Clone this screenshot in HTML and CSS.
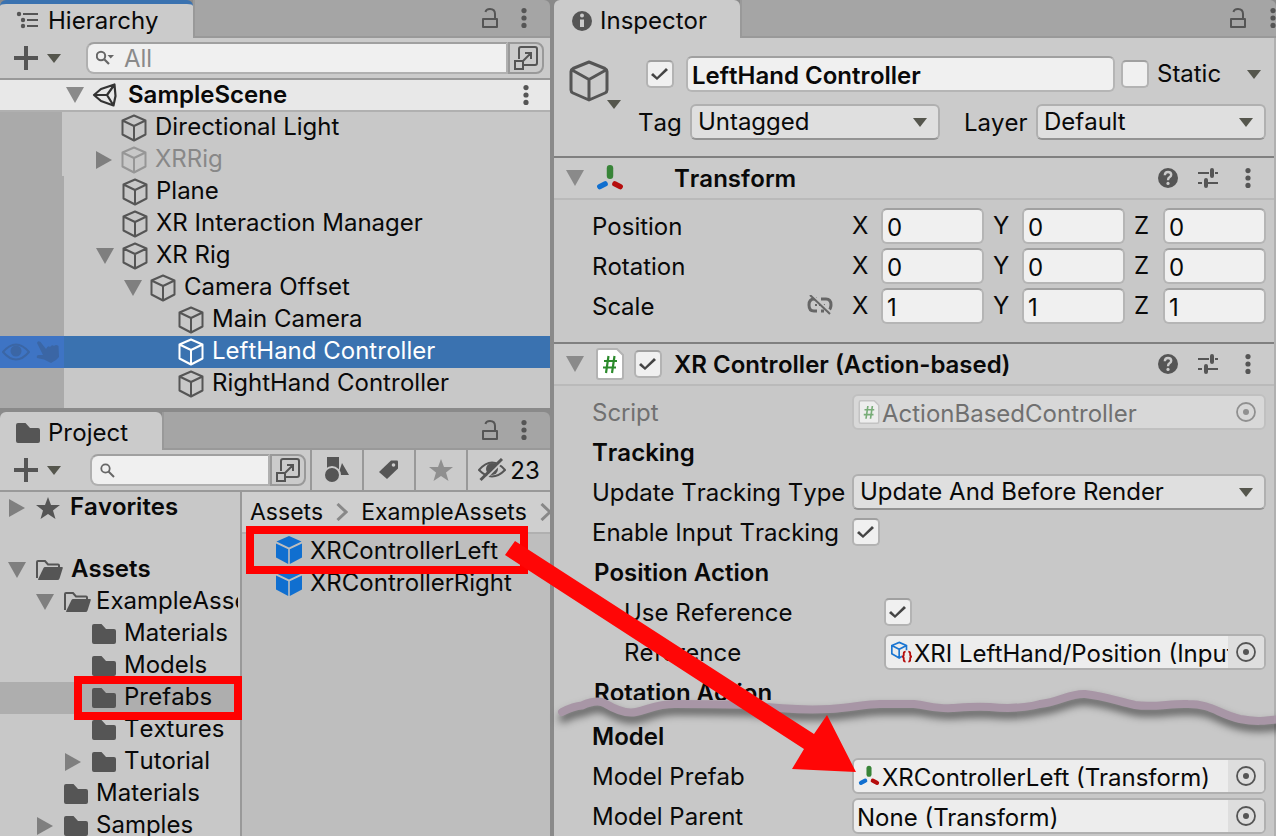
FILE: index.html
```html
<!DOCTYPE html>
<html lang="en">
<head>
<meta charset="utf-8">
<title>SampleScene - Editor</title>
<link rel="stylesheet" href="styles.css">
</head>
<body>
<svg class="sprite" aria-hidden="true">
  <symbol id="cube" viewBox="0 0 26 28"><path d="M13 1.500 24.500 6.500V20.500L13 26.500 1.500 20.500V6.500ZM1.500 6.500 13 12 24.500 6.500M13 12V26.500" fill="none" stroke="currentColor" stroke-width="2" stroke-linejoin="round"/></symbol>
  <symbol id="bigcube" viewBox="0 0 40 42"><path d="M20 2 36 8.500Q38 9.500 38 11.500V30Q38 32 36 33L20 40 4 33Q2 32 2 30V11.500Q2 9.500 4 8.500ZM3 10 20 19.500 37 10M20 19.500V40" fill="none" stroke="currentColor" stroke-width="3" stroke-linejoin="round"/></symbol>
  <symbol id="prefab" viewBox="0 0 26 28"><path d="M13 0 25.500 5.500 13 11.500.5 5.500Z M0 7.500 12.200 13.200V28L0 21.500Z M26 7.500 13.800 13.200V28L26 21.500Z" fill="currentColor"/></symbol>
  <symbol id="open" viewBox="0 0 18 16"><path d="M0 0H18L9 16Z" fill="currentColor"/></symbol>
  <symbol id="shut" viewBox="0 0 18 18"><path d="M1 0 17 9 1 18Z" fill="currentColor"/></symbol>
  <symbol id="drop" viewBox="0 0 14 9"><path d="M0 0H14L7 9Z" fill="currentColor"/></symbol>
  <symbol id="plus" viewBox="0 0 24 24"><path d="M12 0V24M0 12H24" stroke="currentColor" stroke-width="4"/></symbol>
  <symbol id="dots" viewBox="0 0 6 20"><circle cx="3" cy="2.600" r="2.600" fill="currentColor"/><circle cx="3" cy="10" r="2.600" fill="currentColor"/><circle cx="3" cy="17.400" r="2.600" fill="currentColor"/></symbol>
  <symbol id="lock" viewBox="0 0 16 20"><path d="M1 11H15V19H1ZM13 11V6Q13 1 8 1 4 1 3.500 4" fill="none" stroke="currentColor" stroke-width="2" stroke-linejoin="round"/></symbol>
  <symbol id="folder" viewBox="0 0 24 20"><path d="M0 2Q0 0 2 0H9.500L14 5H22Q24 5 24 7V18Q24 20 22 20H2Q0 20 0 18Z" fill="currentColor"/></symbol>
  <symbol id="folderopen" viewBox="0 0 27 20"><path d="M1 18V2Q1 1 2 1H9L12 4.500H22Q23 4.500 23 5.500V7" fill="none" stroke="currentColor" stroke-width="2"/><path d="M7.500 8Q8 7 9 7H26Q27 7 26.800 8L23.500 18.500Q23 20 21.500 20H2.500Q1.800 20 2.200 19Z" fill="currentColor"/></symbol>
  <symbol id="star" viewBox="0 0 24 22"><path d="M12 0 15 8H24L17 13.400 19.500 22 12 17 4.500 22 7 13.400 0 8H9Z" fill="currentColor"/></symbol>
  <symbol id="popout" viewBox="0 0 24 24"><path d="M5 13V3Q5 1 7 1H21Q23 1 23 3V17Q23 19 21 19H10M1 15H9V23H1ZM9 15 17 7M11 7H17V13" fill="none" stroke="currentColor" stroke-width="2"/></symbol>
  <symbol id="axes" viewBox="0 0 26 24"><path d="M13 3V10" stroke="#388438" stroke-width="6" stroke-linecap="round"/><path d="M13 9V12" stroke="#388438" stroke-width="3.500"/><path d="M3.500 20 8.500 17.500" stroke="#106fd0" stroke-width="5" stroke-linecap="round"/><path d="M17.500 17.500 22.500 20" stroke="#b50d0d" stroke-width="5" stroke-linecap="round"/></symbol>
  <symbol id="script" viewBox="0 0 28 32"><path d="M3 1H21L27 7V29Q27 31 25 31H3Q1 31 1 29V3Q1 1 3 1Z" fill="#fff" stroke="#b3b3b3" stroke-width="2"/><path d="M12.500 8 10 25M18.500 8 16 25M8 13H21M7 19.500H20" stroke="#2b8a2b" stroke-width="2.200"/></symbol>
  <symbol id="help" viewBox="0 0 20 20"><circle cx="10" cy="10" r="10" fill="currentColor"/><path d="M6.800 7.200Q7 4 10 4 13.200 4 13.200 6.800 13.200 8.300 11.500 9.300 10 10.200 10 12.200" fill="none" stroke="#cbcbcb" stroke-width="2.400"/><circle cx="10" cy="15.400" r="1.600" fill="#cbcbcb"/></symbol>
  <symbol id="sliders" viewBox="0 0 20 20"><path d="M0 5H11M17 5H20M0 15H4M10 15H20" stroke="currentColor" stroke-width="2"/><path d="M14 2V8M8 12V18" stroke="currentColor" stroke-width="4" stroke-linecap="round"/></symbol>
  <symbol id="target" viewBox="0 0 20 20"><circle cx="10" cy="10" r="9" fill="none" stroke="currentColor" stroke-width="1.800"/><circle cx="10" cy="10" r="3" fill="currentColor"/></symbol>
  <symbol id="chevron" viewBox="0 0 12 18"><path d="M1.500 1 10 9 1.500 17" fill="none" stroke="currentColor" stroke-width="3"/></symbol>
</svg>

<main class="editor">
  <div class="left">
    <section class="panel" aria-label="Hierarchy">
      <header class="tabs">
        <h2 class="tab active">
          <svg class="tab-icon" viewBox="0 0 24 20"><circle cx="3" cy="3" r="2.200" fill="currentColor"/><circle cx="7" cy="9" r="2.200" fill="currentColor"/><circle cx="7" cy="15" r="2.200" fill="currentColor"/><path d="M7 3H22M11 9H22M11 15H22" stroke="currentColor" stroke-width="2"/></svg>
          Hierarchy</h2>
        <div class="strip"><button aria-label="Lock"><svg width="16" height="20"><use href="#lock"/></svg></button><button aria-label="Menu"><svg width="6" height="20"><use href="#dots"/></svg></button></div>
      </header>
      <div class="toolbar">
        <button class="add" aria-label="Create"><svg width="24" height="24"><use href="#plus"/></svg><svg class="olive" width="14" height="9"><use href="#drop"/></svg></button>
        <div class="search wide">
          <svg width="20" height="18" viewBox="0 0 20 18"><circle cx="5" cy="7" r="4.200" fill="none" stroke="currentColor" stroke-width="2"/><path d="M8 10 13 15" stroke="currentColor" stroke-width="2.200"/><path d="M11.500 6H18L14.700 9.500Z" fill="currentColor"/></svg>
          <input type="text" placeholder="All" aria-label="Search hierarchy">
        </div>
        <button class="pop" aria-label="Open search"><svg width="24" height="24"><use href="#popout"/></svg></button>
      </div>
      <div class="scene">
        <svg class="fold" width="18" height="16"><use href="#open"/></svg>
        <svg width="26" height="26" viewBox="0 0 26 26"><path d="M2 13 9 7 22.500 2.500 23.500 14 21.500 23.500 9 19ZM2 13H15M15 13 22.500 2.500M15 13 21.500 23.500" fill="none" stroke="#333" stroke-width="2.200" stroke-linejoin="round"/></svg>
        <b>SampleScene</b>
        <button aria-label="Scene menu"><svg width="6" height="20"><use href="#dots"/></svg></button>
      </div>
      <ul class="tree">
        <li class="row narrow"><i></i><svg class="cube"><use href="#cube"/></svg>Directional Light</li>
        <li class="row narrow faded"><i><svg width="18" height="18"><use href="#shut"/></svg></i><svg class="cube"><use href="#cube"/></svg>XRRig</li>
        <li class="row"><i></i><svg class="cube"><use href="#cube"/></svg>Plane</li>
        <li class="row"><i></i><svg class="cube"><use href="#cube"/></svg>XR Interaction Manager</li>
        <li class="row"><i><svg width="18" height="16"><use href="#open"/></svg></i><svg class="cube"><use href="#cube"/></svg>XR Rig</li>
        <li class="row d1"><i><svg width="18" height="16"><use href="#open"/></svg></i><svg class="cube"><use href="#cube"/></svg>Camera Offset</li>
        <li class="row d2"><i></i><svg class="cube"><use href="#cube"/></svg>Main Camera</li>
        <li class="row d2 selected">
          <span class="flags">
            <svg width="28" height="18" viewBox="0 0 28 18"><path d="M1 9Q14-6 27 9 14 24 1 9Z" fill="none" stroke="currentColor" stroke-width="2"/><circle cx="14" cy="8" r="5.500" fill="currentColor"/></svg>
            <svg width="24" height="24" viewBox="0 0 24 24"><path d="M1 3Q2 0 4.500 2L10 9Q12 5 14 7 16 4 18 6 20 4 22.500 6L23 17 20 20 15 23 8 19.500 1 18Q0 15 3 15L7 15Z" fill="currentColor"/></svg>
          </span>
          <i></i><svg class="cube"><use href="#cube"/></svg>LeftHand Controller</li>
        <li class="row d2"><i></i><svg class="cube"><use href="#cube"/></svg>RightHand Controller</li>
      </ul>
    </section>

    <section class="panel project" aria-label="Project">
      <header class="tabs">
        <h2 class="tab"><svg class="tab-icon"><use href="#folder"/></svg>Project</h2>
        <div class="strip"><button aria-label="Lock"><svg width="16" height="20"><use href="#lock"/></svg></button><button aria-label="Menu"><svg width="6" height="20"><use href="#dots"/></svg></button></div>
      </header>
      <div class="toolbar">
        <button class="add" aria-label="Create"><svg width="24" height="24"><use href="#plus"/></svg><svg class="olive" width="14" height="9"><use href="#drop"/></svg></button>
        <div class="search">
          <svg width="16" height="16" viewBox="0 0 16 16"><circle cx="5.500" cy="6.500" r="4.200" fill="none" stroke="currentColor" stroke-width="1.800"/><path d="M8.500 9.500 14 15" stroke="currentColor" stroke-width="2"/></svg>
          <input type="text" aria-label="Search project">
        </div>
        <button class="pop" aria-label="Open search"><svg width="24" height="24"><use href="#popout"/></svg></button>
        <div class="filters">
          <button aria-label="Search by type"><svg width="26" height="28" viewBox="0 0 26 28"><path d="M3 1H15V13H3ZM18 7 25 19H14Z" fill="currentColor"/><circle cx="8" cy="19" r="8" fill="currentColor" stroke="#cbcbcb" stroke-width="2"/></svg></button>
          <button aria-label="Search by label"><svg width="22" height="22" viewBox="0 0 22 22"><path d="M13 1.500H19Q20 1.500 20 2.500V9.500L9 20 1 13Z" fill="currentColor"/><circle cx="15.500" cy="6" r="1.800" fill="#cbcbcb"/></svg></button>
          <button class="dim" aria-label="Favorite"><svg width="24" height="22"><use href="#star"/></svg></button>
          <button class="count"><svg width="28" height="24" viewBox="0 0 28 24"><path d="M1 12Q14-3 27 12 14 25 1 12Z" fill="none" stroke="currentColor" stroke-width="2"/><circle cx="14" cy="11" r="6" fill="currentColor"/><path d="M4 24 26 2" stroke="#cbcbcb" stroke-width="2"/><path d="M2.500 22 24 1" stroke="currentColor" stroke-width="3"/></svg>23</button>
        </div>
      </div>
      <div class="browser">
        <ul class="folders">
          <li class="frow root fav"><i><svg width="18" height="18"><use href="#shut"/></svg></i><svg class="ficon"><use href="#star"/></svg>Favorites</li>
          <li class="frow root"><i><svg width="18" height="16"><use href="#open"/></svg></i><svg class="ficon wideicon"><use href="#folderopen"/></svg>Assets</li>
          <li class="frow f1"><i><svg width="18" height="16"><use href="#open"/></svg></i><svg class="ficon wideicon"><use href="#folderopen"/></svg>ExampleAssets</li>
          <li class="frow f2"><i></i><svg class="ficon"><use href="#folder"/></svg>Materials</li>
          <li class="frow f2"><i></i><svg class="ficon"><use href="#folder"/></svg>Models</li>
          <li class="frow f2 current"><i></i><svg class="ficon"><use href="#folder"/></svg>Prefabs</li>
          <li class="frow f2"><i></i><svg class="ficon"><use href="#folder"/></svg>Textures</li>
          <li class="frow f2"><i><svg width="18" height="18"><use href="#shut"/></svg></i><svg class="ficon"><use href="#folder"/></svg>Tutorial</li>
          <li class="frow f1"><i></i><svg class="ficon"><use href="#folder"/></svg>Materials</li>
          <li class="frow f1"><i><svg width="18" height="18"><use href="#shut"/></svg></i><svg class="ficon"><use href="#folder"/></svg>Samples</li>
        </ul>
        <div class="files">
          <nav class="crumbs"><span>Assets</span><svg><use href="#chevron"/></svg><span>ExampleAssets</span><svg><use href="#chevron"/></svg></nav>
          <ul>
            <li class="file"><svg><use href="#prefab"/></svg>XRControllerLeft</li>
            <li class="file"><svg><use href="#prefab"/></svg>XRControllerRight</li>
          </ul>
        </div>
      </div>
    </section>
  </div>

  <section class="panel inspector" aria-label="Inspector">
    <header class="tabs">
      <h2 class="tab"><svg class="tab-icon info" viewBox="0 0 20 20"><circle cx="10" cy="10" r="10" fill="currentColor"/><circle cx="10" cy="4.500" r="2" fill="#cbcbcb"/><path d="M8 8.500H12V16H8Z" fill="#cbcbcb"/></svg>Inspector</h2>
      <div class="strip"><button aria-label="Lock"><svg width="16" height="20"><use href="#lock"/></svg></button><button aria-label="Menu"><svg width="6" height="20"><use href="#dots"/></svg></button></div>
    </header>
    <div class="inner">
      <div class="object">
        <button class="objicon" aria-label="Object icon"><svg width="40" height="42"><use href="#bigcube"/></svg><svg class="olive" width="14" height="9"><use href="#drop"/></svg></button>
        <div class="objfields">
          <div class="line">
            <input type="checkbox" checked aria-label="Active">
            <input class="field name" type="text" value="LeftHand Controller" aria-label="Name">
            <label class="static"><input type="checkbox">Static</label>
            <button aria-label="Static options"><svg class="olive" width="14" height="9"><use href="#drop"/></svg></button>
          </div>
          <div class="line tags">
            <label for="tag">Tag</label>
            <span class="select"><select id="tag"><option>Untagged</option></select></span>
            <label class="layer" for="layer">Layer</label>
            <span class="select"><select id="layer"><option>Default</option></select></span>
          </div>
        </div>
      </div>

      <div class="component">
        <svg class="fold" width="18" height="16"><use href="#open"/></svg>
        <svg width="28" height="26"><use href="#axes"/></svg>
        <span class="slot"></span>
        <h3>Transform</h3>
        <button aria-label="Help"><svg width="20" height="20"><use href="#help"/></svg></button>
        <button aria-label="Presets"><svg width="20" height="20"><use href="#sliders"/></svg></button>
        <button aria-label="Menu"><svg width="20" height="20"><use href="#dots"/></svg></button>
      </div>
      <div class="props transform">
        <span>Position</span>
        <div class="vec"><label>X<input class="field" value="0"></label><label>Y<input class="field" value="0"></label><label>Z<input class="field" value="0"></label></div>
        <span>Rotation</span>
        <div class="vec"><label>X<input class="field" value="0"></label><label>Y<input class="field" value="0"></label><label>Z<input class="field" value="0"></label></div>
        <span class="linked">Scale
          <svg width="26" height="20" viewBox="0 0 26 20"><path d="M10 4H7Q2 4 2 10 2 16 7 16H10M14 4H19Q24 4 24 10 24 14 21 15.500M14 16H17" fill="none" stroke="currentColor" stroke-width="3"/><path d="M8 10H10M12 10H14M16 10H18" stroke="currentColor" stroke-width="2"/><path d="M5 0 25 18" stroke="#c8c8c8" stroke-width="2"/><path d="M3 0 23 19" stroke="currentColor" stroke-width="2"/></svg></span>
        <div class="vec"><label>X<input class="field" value="1"></label><label>Y<input class="field" value="1"></label><label>Z<input class="field" value="1"></label></div>
      </div>

      <div class="component">
        <svg class="fold" width="18" height="16"><use href="#open"/></svg>
        <svg width="28" height="32"><use href="#script"/></svg>
        <span class="slot"><input type="checkbox" checked aria-label="Enabled"></span>
        <h3>XR Controller (Action-based)</h3>
        <button aria-label="Help"><svg width="20" height="20"><use href="#help"/></svg></button>
        <button aria-label="Presets"><svg width="20" height="20"><use href="#sliders"/></svg></button>
        <button aria-label="Menu"><svg width="20" height="20"><use href="#dots"/></svg></button>
      </div>
      <div class="props">
        <span class="muted">Script</span>
        <div class="ref muted"><svg class="reficon" width="22" height="24"><use href="#script"/></svg><span>ActionBasedController</span><button disabled aria-label="Pick script"><svg width="20" height="20"><use href="#target"/></svg></button></div>
        <h4>Tracking</h4>
        <label for="update">Update Tracking Type</label>
        <span class="select"><select class="kerned" id="update"><option>Update And Before Render</option></select></span>
        <label for="enable">Enable Input Tracking</label>
        <div><input id="enable" type="checkbox" checked></div>
        <h4 class="shift">Position Action</h4>
        <label class="sub" for="useref">Use Reference</label>
        <div class="inset"><input id="useref" type="checkbox" checked></div>
        <span class="sub">Reference</span>
        <div class="ref inset"><svg class="reficon" width="22" height="24" viewBox="0 0 24 24"><path d="M10 1.500 18 5V14L10 18.500 2 14V5ZM2 5 10 9 18 5M10 9V18" fill="none" stroke="#1b76d2" stroke-width="1.800"/><path d="M13 10H24V24H13Z" fill="#ededed"/><path d="M17 11.500Q15 11.500 15 13.500V15Q15 17 13 17 15 17 15 19V20.500Q15 22.500 17 22.500M20 11.500Q22 11.500 22 13.500V15Q22 17 24 17 22 17 22 19V20.500Q22 22.500 20 22.500" fill="none" stroke="#b50d0d" stroke-width="2"/></svg><span>XRI LeftHand/Position (Input</span><button aria-label="Pick reference"><svg width="20" height="20"><use href="#target"/></svg></button></div>
        <h4 class="shift cut">Rotation Action</h4>
      </div>
      <div class="props model">
        <h4>Model</h4>
        <span>Model Prefab</span>
        <div class="ref"><svg class="reficon" width="22" height="22"><use href="#axes"/></svg><span>XRControllerLeft (Transform)</span><button aria-label="Pick prefab"><svg width="20" height="20"><use href="#target"/></svg></button></div>
        <span>Model Parent</span>
        <div class="ref"><span>None (Transform)</span><button aria-label="Pick parent"><svg width="20" height="20"><use href="#target"/></svg></button></div>
      </div>
    </div>
  </section>

  <svg class="marks" viewBox="0 0 1276 836" aria-hidden="true">
    <path class="tear" d="M562 712C568 709 575 706 582 705.500 590 702 600 700 606 704 616 710 626 714 636 712 650 709 656 704 675 704 700 704 730 704 750 705 780 709 810 710 830 709 850 708 865 704 880 704L914 704C930 706 938 709 952 708 966 707 976 706 990 707 1010 709 1025 708 1040 704 1060 702 1070 693 1085 694 1105 696 1120 702 1135 705 1155 708 1170 703 1188 704 1212 704 1218 714 1240 719 1255 722 1265 721 1280 719"/>
    <rect class="box" x="250" y="530" width="274" height="40"/>
    <rect class="box" x="78" y="680" width="160" height="36"/>
    <path class="arrow" d="M515 541 814 734 827 715 856 772 792 769 804 749 505 555Z"/>
  </svg>
</main>
</body>
</html>
```
FILE: styles.css
```css
* { box-sizing: border-box; }

body {
  margin: 0;
  font: 24px/32px Inter, "Liberation Sans", sans-serif;
  font-kerning: none;
  color: #090909;
  background: #8a8a8a;
}

ul { margin: 0; padding: 0; list-style: none; }
h2, h3, h4 { margin: 0; font-size: inherit; }
svg { flex: none; display: block; }
i { flex: none; width: 18px; color: #7f7f7f; }

button {
  display: flex;
  align-items: center;
  justify-content: center;
  padding: 0;
  border: 0;
  background: none;
  font: inherit;
  color: #555;
}

.sprite { position: absolute; width: 0; height: 0; }
.olive { color: #55564d; }
.fold { color: #8a8a8a; }

.editor {
  position: relative;
  display: grid;
  grid-template-columns: minmax(0, 550fr) minmax(0, 722fr);
  gap: 4px;
  height: 100vh;
  overflow: hidden;
}

.left {
  display: flex;
  flex-direction: column;
  gap: 4px;
  min-height: 0;
}

.panel { background: #c8c8c8; }

/* Tab strip */
.tabs { display: flex; height: 38px; background: #8a8a8a; }

.tab {
  display: flex;
  align-items: center;
  gap: 8px;
  padding: 4px 34px 0 16px;
  border-radius: 6px 6px 0 0;
  font-weight: 400;
  background: #cbcbcb;
}

.tab.active { padding-top: 0; border-top: 4px solid #3a72b0; }
.tab-icon { width: 24px; height: 20px; color: #555; }
.tab-icon.info { width: 20px; }

.strip {
  flex: 1;
  display: flex;
  align-items: center;
  justify-content: flex-end;
  gap: 23px;
  padding-right: 23px;
  border-bottom: 2px solid #999;
  border-left: 2px solid #999;
  border-top-right-radius: 6px;
  background: #a5a5a5;
}

/* Toolbars */
.toolbar {
  display: flex;
  align-items: center;
  height: 42px;
  padding-left: 14px;
  border-bottom: 2px solid #999;
  background: #cbcbcb;
}

.add { gap: 9px; margin-right: 29px; }

.search {
  flex: 1;
  display: flex;
  align-items: center;
  gap: 8px;
  height: 32px;
  min-width: 0;
  padding-left: 8px;
  border: 2px solid #b0b0b0;
  border-top-color: #a0a0a0;
  border-radius: 8px 0 0 8px;
  background: #f0f0f0;
  color: #666;
}

.search.wide { margin-left: -4px; }

.search input {
  flex: 1;
  min-width: 0;
  padding: 2px 0 0;
  border: 0;
  background: none;
  font: inherit;
}

.search input::placeholder { color: #8a8a8a; opacity: 1; }

.pop {
  width: 36px;
  height: 32px;
  margin-right: 6px;
  border: 2px solid #999;
  border-radius: 0 8px 8px 0;
}

.project .pop { margin-right: 4px; }
.filters { display: flex; align-self: stretch; }
.filters button { width: 52px; border-left: 2px solid #999; }
.filters .dim { color: #8f8f8f; }
.filters .count { gap: 4px; width: 84px; padding-top: 2px; color: #090909; }
.filters .count svg { margin-bottom: 2px; color: #555; }

/* Hierarchy */
.scene {
  display: flex;
  align-items: center;
  gap: 8px;
  height: 32px;
  padding: 0 21px 0 66px;
  border-bottom: 2px solid #b0b0b0;
  background: #e8e8e8;
}

.scene b { flex: 1; padding-left: 2px; font-weight: 600; }

.tree {
  padding-bottom: 8px;
  background: linear-gradient(to right, #aaa 64px, #c8c8c8 64px);
}

.row {
  position: relative;
  display: flex;
  align-items: center;
  gap: 8px;
  height: 32px;
  padding: 0 0 2px 96px;
  white-space: nowrap;
}

.row.narrow {
  padding-left: 95px;
  background: linear-gradient(to right, #aaa 62px, #c8c8c8 62px);
}

.row.d1 { padding-left: 124px; }
.row.d2 { padding-left: 152px; }
.row.faded { color: #888; }
.cube { width: 26px; height: 28px; margin-top: 1px; color: #555; }
.row i { padding-top: 1px; }
.faded .cube { color: #969696; }

.selected {
  color: #fff;
  background: linear-gradient(to right, #3e74c4 64px, #3a72b0 64px);
}

.selected .cube { color: #fff; }

.flags {
  position: absolute;
  left: 2px;
  top: 4px;
  display: flex;
  align-items: center;
  gap: 6px;
  color: #3b66a5;
}

/* Project */
.project {
  flex: 1;
  display: flex;
  flex-direction: column;
  min-height: 0;
}

.browser {
  flex: 1;
  display: grid;
  grid-template-columns: minmax(0, 242fr) minmax(0, 308fr);
  min-height: 0;
  overflow: hidden;
}

.folders { border-right: 2px solid #999; overflow: hidden; }

.frow {
  display: flex;
  align-items: center;
  height: 32px;
  margin-right: 2px;
  padding: 0 0 2px 8px;
  overflow: hidden;
  white-space: nowrap;
}

.frow i { margin-right: 10px; padding-top: 2px; }
.frow.fav { margin-bottom: 30px; }
.frow.f1 { padding-left: 36px; }
.frow.f2 { padding-left: 64px; }
.frow.current { margin-right: 0; background: #aeaeae; }
.root { font-weight: 600; }
.ficon { width: 24px; height: 20px; margin: 2px 8px 0 0; color: #555; }
.fav .ficon { height: 22px; }
.ficon.wideicon { width: 27px; margin-right: 5px; }
.root .ficon { margin-right: 10px; }
.root .ficon.wideicon { margin-right: 8px; }

.files { overflow: hidden; background: #bebebe; }

.crumbs {
  display: flex;
  align-items: center;
  gap: 13px;
  height: 42px;
  padding-left: 8px;
  border-bottom: 2px solid #b0b0b0;
  background: #cfcfcf;
  font-size: 23px;
}

.crumbs svg { width: 12px; height: 18px; color: #888; }

.file {
  display: flex;
  align-items: center;
  gap: 8px;
  height: 32px;
  padding: 2px 0 0 34px;
}

.file svg { width: 26px; height: 28px; margin-bottom: 2px; color: #106fd0; }

/* Inspector */
.inspector { display: flex; flex-direction: column; min-height: 0; }
.inspector .strip { padding-right: 0; gap: 24px; }
.inspector .tab { padding: 4px 33px 0 18px; }
.inner { flex: 1; border-right: 2px solid #b0b0b0; }

.object {
  display: flex;
  align-items: flex-start;
  height: 120px;
  padding: 18px 8px 0 14px;
  border-bottom: 2px solid #808080;
  background: #cbcbcb;
}

.objicon { align-items: flex-end; width: 54px; padding-top: 4px; }
.objicon .olive { margin: 0 0 -7px -2px; }

.objfields {
  flex: 1;
  display: flex;
  flex-direction: column;
  gap: 12px;
  min-width: 0;
  padding-left: 16px;
}

.line { display: flex; align-items: center; height: 36px; }
.line > input[type="checkbox"] { margin-left: 8px; }
.static { display: flex; align-items: center; gap: 8px; width: 126px; }
.static + button { padding-right: 5px; }
.tags label { flex: none; width: 52px; padding-top: 2px; }
.tags .layer { width: 72px; margin-left: 24px; }
.tags .select { flex: 250 1 0; }
.tags .layer + .select { flex-grow: 230; }

input[type="checkbox"] {
  flex: none;
  appearance: none;
  display: block;
  width: 28px;
  height: 28px;
  margin: 0;
  border: 2px solid #b3b3b3;
  border-top-color: #a0a0a0;
  border-radius: 5px;
  background: #f0f0f0;
}

input[type="checkbox"]:checked::before {
  content: "";
  display: block;
  width: 24px;
  height: 24px;
  background: #444;
  clip-path: polygon(3px 13px, 5px 11px, 9px 15px, 18px 6px, 20px 8px, 9px 18px);
}

.field {
  width: 100%;
  height: 36px;
  padding: 2px 4px 0;
  border: 2px solid #b5b5b5;
  border-top-color: #a0a0a0;
  border-radius: 6px;
  background: #f0f0f0;
  font: inherit;
  font-kerning: none;
  color: #090909;
}

.field.name {
  flex: 1;
  min-width: 0;
  margin: 0 6px 0 12px;
  font-weight: 600;
}

.select { position: relative; display: block; min-width: 0; }

.select::after {
  content: "";
  position: absolute;
  right: 13px;
  top: 14px;
  width: 14px;
  height: 9px;
  background: #55564d;
  clip-path: polygon(0 0, 100% 0, 50% 100%);
}

select {
  appearance: none;
  display: block;
  width: 100%;
  height: 36px;
  padding: 0 30px 2px 6px;
  border: 2px solid #b0b0b0;
  border-bottom-color: #939393;
  border-radius: 6px;
  background: #dfdfdf;
  font: inherit;
  font-kerning: none;
  color: #090909;
}

.component {
  display: flex;
  align-items: center;
  gap: 20px;
  height: 42px;
  padding: 0 16px 0 12px;
  border-bottom: 2px solid #bababa;
  background: #cbcbcb;
}

.component > .fold { margin-right: -8px; }
.slot { width: 28px; margin-left: -10px; }
.component h3 { flex: 1; margin-left: -8px; padding-top: 2px; font-weight: 600; }

.props {
  display: grid;
  grid-template-columns: minmax(0, 260fr) minmax(0, 414fr);
  grid-auto-rows: 36px;
  gap: 4px 0;
  align-items: center;
  padding: 8px 8px 0 38px;
  white-space: nowrap;
}

.props > label,
.props > span:not(.select),
.props > h4,
.vec label { line-height: 34px; }

.props > label,
.props > span:not(.select),
.props > h4 { padding-top: 2px; }

.props.transform { padding-bottom: 18px; border-bottom: 2px solid #808080; }
.props h4 { grid-column: 1 / -1; font-weight: 600; }
.props .shift { padding-left: 2px; }
.props .sub { padding-left: 32px; }
.props .inset { margin-left: 32px; }
.props .cut { align-self: start; height: 26px; overflow: hidden; }
.muted { color: #707070; }

.linked { display: flex; align-items: center; justify-content: space-between; padding-right: 19px; }
.linked svg { margin-bottom: 4px; color: #666; }

.vec { display: grid; grid-template-columns: repeat(3, minmax(0, 1fr)); gap: 9px; }
.vec label { display: grid; grid-template-columns: 29px minmax(0, 1fr); align-items: center; }

.ref {
  display: flex;
  align-items: stretch;
  height: 36px;
  padding-left: 3px;
  border: 2px solid #b0b0b0;
  border-radius: 6px;
  background: #ededed;
  overflow: hidden;
}

.reficon { align-self: center; margin: 0 2px 0 1px; }
.ref span { flex: 1; min-width: 0; padding-top: 2px; overflow: hidden; font-kerning: normal; }
.ref button { flex: none; width: 36px; background: #dedede; }
.ref.muted { border-color: #c0c0c0; background: #d8d8d8; }
.ref.muted button { background: none; color: #909090; }
.muted .reficon { opacity: 0.55; }
.kerned { font-kerning: normal; }

/* Annotations drawn over the editor */
.marks {
  position: absolute;
  inset: 0;
  width: 100%;
  height: 100%;
  pointer-events: none;
}

.tear {
  fill: none;
  stroke: #a896a6;
  stroke-width: 8px;
  stroke-linecap: round;
  filter: drop-shadow(1px 6px 4px rgba(0, 0, 0, 0.6));
}

.box { fill: none; stroke: #f00; stroke-width: 8px; }
.arrow { fill: #ff0606; }
```
